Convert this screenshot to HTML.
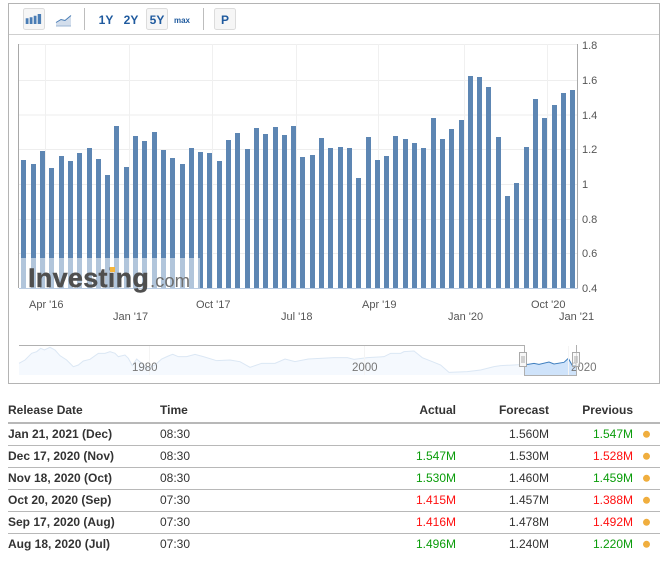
<!DOCTYPE html>
<html>
<head>
<meta charset="utf-8">
<style>
html,body{margin:0;padding:0;background:#fff;width:668px;height:562px;overflow:hidden}
svg{display:block;font-family:"Liberation Sans",Arial,sans-serif;filter:blur(.3px)}
.ax{font-size:11px;fill:#555}
.y{font-size:11px;fill:#555}
.tb{font-size:12px;font-weight:bold;fill:#1f5a9e;text-anchor:middle}
.h{font-size:12px;font-weight:bold;fill:#333}
.d{font-size:12px;font-weight:bold;fill:#333}
.t{font-size:12px;fill:#333}
.e{text-anchor:end}
.g{fill:#0a9c0a}
.r{fill:#ff0f0f}
</style>
</head>
<body>
<svg width="668" height="562" viewBox="0 0 668 562" xmlns="http://www.w3.org/2000/svg">
<!-- frame -->
<rect x="8.5" y="3.5" width="651" height="380" fill="#fff" stroke="#b4b4b4"/>
<path d="M9 34.5H659" stroke="#cfcfcf"/>
<!-- toolbar -->
<rect x="23.5" y="8.5" width="21" height="21" rx="2" fill="#f6f6f6" stroke="#dcdcdc"/>
<path d="M25.700 18.300h2.800V24h-2.800zM29.700 17.300h2.800V24h-2.800zM33.700 15.700h2.800V24h-2.800zM37.700 14h3.400V24h-3.400z" fill="#4a7db5"/>
<path d="M56 25.800V22.500L61 19.500L65 20.500L71 15.500V25.800Z" fill="#d3deec"/>
<path d="M56 22.500L61 19.500L65 20.500L71 15.500" fill="none" stroke="#4a7db5" stroke-width="1"/>
<path d="M56 26H71" stroke="#9db7d4"/>
<path d="M84.500 8V30M203.500 8V30" stroke="#bdbdbd"/>
<text x="106" y="24" class="tb">1Y</text>
<text x="131" y="24" class="tb">2Y</text>
<rect x="146.500" y="8.500" width="21" height="21" rx="2" fill="#f6f6f6" stroke="#dcdcdc"/>
<text x="157" y="24" class="tb">5Y</text>
<text x="182" y="23" class="tb" style="font-size:8px">max</text>
<rect x="214.500" y="8.500" width="21" height="21" rx="2" fill="#f6f6f6" stroke="#dcdcdc"/>
<text x="225" y="24" class="tb">P</text>
<!-- grid -->
<path d="M19 44.500H577M19 80.500H577M19 115H577M19 149.500H577M19 184.500H577M19 219.500H577M19 253.500H577" stroke="#eeeeee" fill="none"/>
<path d="M45.500 44V288M129.500 44V288M212.500 44V288M296.500 44V288M378.500 44V288M464.500 44V288M547.500 44V288" stroke="#f0f0f0" fill="none"/>
<path d="M18.500 44V288" stroke="#a8a8a8"/>
<path d="M577.500 44V288" stroke="#a8a8a8"/>
<path d="M19 288.500H578" stroke="#b9cbe2"/>
<!-- bars -->
<path fill="#5d86b3" d="M21 160h5V288h-5zM31 164h5V288h-5zM40 151h5V288h-5zM49 168h5V288h-5zM59 156h5V288h-5zM68 161h5V288h-5zM77 153h5V288h-5zM87 148h5V288h-5zM96 159h5V288h-5zM105 175h5V288h-5zM114 126h5V288h-5zM124 167h5V288h-5zM133 136h5V288h-5zM142 141h5V288h-5zM152 132h5V288h-5zM161 150h5V288h-5zM170 158h5V288h-5zM180 164h5V288h-5zM189 148h5V288h-5zM198 152h5V288h-5zM207 153h5V288h-5zM217 161h5V288h-5zM226 140h5V288h-5zM235 133h5V288h-5zM245 149h5V288h-5zM254 128h5V288h-5zM263 134h5V288h-5zM273 127h5V288h-5zM282 135h5V288h-5zM291 126h5V288h-5zM300 157h5V288h-5zM310 155h5V288h-5zM319 138h5V288h-5zM328 148h5V288h-5zM338 147h5V288h-5zM347 148h5V288h-5zM356 178h5V288h-5zM366 137h5V288h-5zM375 160h5V288h-5zM384 156h5V288h-5zM393 136h5V288h-5zM403 139h5V288h-5zM412 143h5V288h-5zM421 148h5V288h-5zM431 118h5V288h-5zM440 139h5V288h-5zM449 129h5V288h-5zM459 120h5V288h-5zM468 76h5V288h-5zM477 77h5V288h-5zM486 87h5V288h-5zM496 137h5V288h-5zM505 196h5V288h-5zM514 183h5V288h-5zM524 147h5V288h-5zM533 99h5V288h-5zM542 118h5V288h-5zM552 105h5V288h-5zM561 93h5V288h-5zM570 90h5V288h-5z"/>
<!-- watermark -->
<rect x="19" y="258" width="181" height="30" fill="#fff" fill-opacity=".52"/>
<text x="28" y="287" style="font-size:27px;font-weight:bold;letter-spacing:.3px" fill="#4f4f4f" stroke="#4f4f4f" stroke-width=".4">Investing</text>
<text x="150" y="287" style="font-size:18.500px" fill="#6f6f6f">.com</text>
<rect x="110" y="267" width="5" height="5" fill="#f6b63d"/>
<!-- y axis -->
<text x="582" y="49" class="y">1.8</text>
<text x="582" y="84" class="y">1.6</text>
<text x="582" y="119" class="y">1.4</text>
<text x="582" y="153" class="y">1.2</text>
<text x="582" y="188" class="y">1</text>
<text x="582" y="223" class="y">0.8</text>
<text x="582" y="257" class="y">0.6</text>
<text x="582" y="292" class="y">0.4</text>
<!-- x axis -->
<text x="29" y="308" class="ax">Apr '16</text>
<text x="113" y="320" class="ax">Jan '17</text>
<text x="196" y="308" class="ax">Oct '17</text>
<text x="281" y="320" class="ax">Jul '18</text>
<text x="362" y="308" class="ax">Apr '19</text>
<text x="448" y="320" class="ax">Jan '20</text>
<text x="531" y="308" class="ax">Oct '20</text>
<text x="559" y="320" class="ax">Jan '21</text>
<!-- navigator -->
<g transform="translate(0,335) scale(.33333)">
<path fill="#f5f9fe" d="M57 120V85L75 75L95 55L110 50L122 40L133 45L150 37L165 45L180 62L200 75L220 95L235 90L250 78L270 73L295 55L315 55L330 50L345 55L355 65L375 60L385 70L397 92L410 72L425 85L440 100L465 90L485 72L505 63L518 58L535 65L560 65L585 58L610 65L650 77L690 75L720 80L750 97L785 85L825 85L855 72L885 80L925 72L1002 68L1042 68L1062 73L1102 68L1152 65L1172 55L1202 55L1212 50L1242 48L1267 68L1302 82L1322 90L1347 112L1402 110L1442 105L1482 95L1502 92L1574 88V120Z"/>
<path fill="none" stroke="#dbe7f4" stroke-width="3" d="M57 85L75 75L95 55L110 50L122 40L133 45L150 37L165 45L180 62L200 75L220 95L235 90L250 78L270 73L295 55L315 55L330 50L345 55L355 65L375 60L385 70L397 92L410 72L425 85L440 100L465 90L485 72L505 63L518 58L535 65L560 65L585 58L610 65L650 77L690 75L720 80L750 97L785 85L825 85L855 72L885 80L925 72L1002 68L1042 68L1062 73L1102 68L1152 65L1172 55L1202 55L1212 50L1242 48L1267 68L1302 82L1322 90L1347 112L1402 110L1442 105L1482 95L1502 92L1574 88"/>
<path fill="#cfe3fa" d="M1574 88L1584 88L1602 85L1617 88L1647 81L1662 87L1692 82L1705 70L1717 92L1729 92V120H1574Z"/>
<path fill="none" stroke="#3f7fbf" stroke-width="3" d="M1574 88L1584 88L1602 85L1617 88L1647 81L1662 87L1692 82L1705 70L1717 92L1729 92"/>
</g>
<path d="M149.500 346V375M364.500 346V375M568.500 346V375" stroke="#f4f4f4"/>
<text x="132" y="371" style="font-size:11.500px" fill="#777">1980</text>
<text x="352" y="371" style="font-size:11.500px" fill="#777">2000</text>
<text x="571" y="371" style="font-size:11.500px" fill="#777">2020</text>
<path d="M19 345.500H524.500V375.500H576.500V345" fill="none" stroke="#b0b0b0"/>
<rect x="519.500" y="352.500" width="7" height="14" fill="#f7f7f7" stroke="#aaa"/>
<path d="M522 356V363M524 356V363" stroke="#aaa"/>
<rect x="572.500" y="352.500" width="7" height="14" fill="#f7f7f7" fill-opacity=".6" stroke="#aaa"/>
<path d="M575 356V363M577 356V363" stroke="#aaa"/>
<!-- table -->
<text x="8" y="414" class="h">Release Date</text>
<text x="160" y="414" class="h">Time</text>
<text x="456" y="414" class="h e">Actual</text>
<text x="549" y="414" class="h e">Forecast</text>
<text x="633" y="414" class="h e">Previous</text>
<rect x="8" y="422" width="652" height="2" fill="#b8b8b8"/>
<path d="M8 445.500H660M8 467.500H660M8 489.500H660M8 511.500H660M8 533.500H660" stroke="#b8b8b8"/>

<text x="8" y="438" class="d">Jan 21, 2021 (Dec)</text>
<text x="160" y="438" class="t">08:30</text>
<text x="549" y="438" class="t e">1.560M</text>
<text x="633" y="438" class="t e g">1.547M</text>
<circle cx="646.500" cy="434.300" r="3.500" fill="#f0ae3e"/>

<text x="8" y="460" class="d">Dec 17, 2020 (Nov)</text>
<text x="160" y="460" class="t">08:30</text>
<text x="456" y="460" class="t e g">1.547M</text>
<text x="549" y="460" class="t e">1.530M</text>
<text x="633" y="460" class="t e r">1.528M</text>
<circle cx="646.500" cy="456.300" r="3.500" fill="#f0ae3e"/>

<text x="8" y="482" class="d">Nov 18, 2020 (Oct)</text>
<text x="160" y="482" class="t">08:30</text>
<text x="456" y="482" class="t e g">1.530M</text>
<text x="549" y="482" class="t e">1.460M</text>
<text x="633" y="482" class="t e g">1.459M</text>
<circle cx="646.500" cy="478.300" r="3.500" fill="#f0ae3e"/>

<text x="8" y="504" class="d">Oct 20, 2020 (Sep)</text>
<text x="160" y="504" class="t">07:30</text>
<text x="456" y="504" class="t e r">1.415M</text>
<text x="549" y="504" class="t e">1.457M</text>
<text x="633" y="504" class="t e r">1.388M</text>
<circle cx="646.500" cy="500.300" r="3.500" fill="#f0ae3e"/>

<text x="8" y="526" class="d">Sep 17, 2020 (Aug)</text>
<text x="160" y="526" class="t">07:30</text>
<text x="456" y="526" class="t e r">1.416M</text>
<text x="549" y="526" class="t e">1.478M</text>
<text x="633" y="526" class="t e r">1.492M</text>
<circle cx="646.500" cy="522.300" r="3.500" fill="#f0ae3e"/>

<text x="8" y="548" class="d">Aug 18, 2020 (Jul)</text>
<text x="160" y="548" class="t">07:30</text>
<text x="456" y="548" class="t e g">1.496M</text>
<text x="549" y="548" class="t e">1.240M</text>
<text x="633" y="548" class="t e g">1.220M</text>
<circle cx="646.500" cy="544.300" r="3.500" fill="#f0ae3e"/>
</svg>
</body>
</html>
